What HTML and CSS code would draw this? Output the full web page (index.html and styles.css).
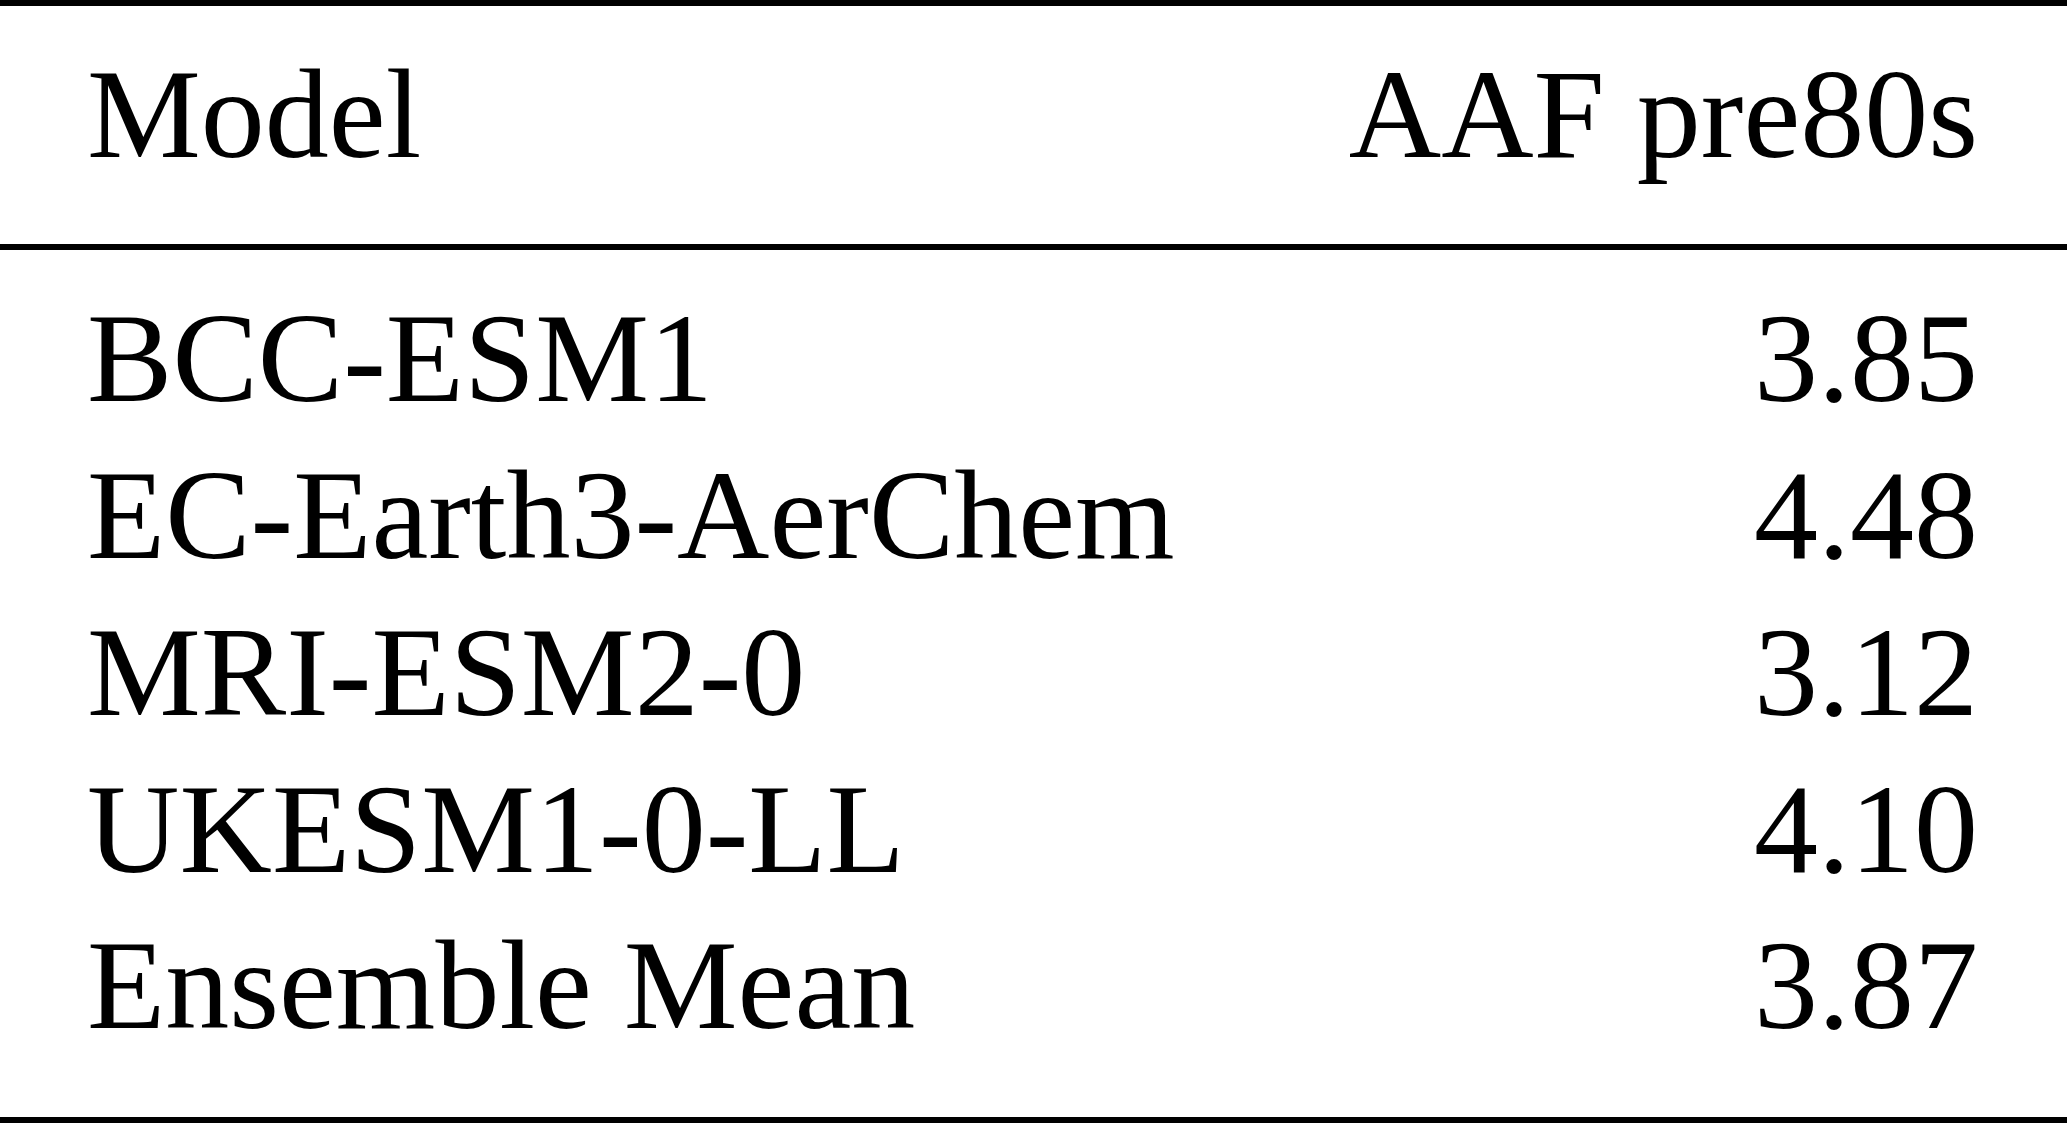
FILE: index.html
```html
<!DOCTYPE html>
<html>
<head>
<meta charset="utf-8">
<link rel="stylesheet" href="styles.css">
</head>
<body>
<div class="table">
  <div class="head">
    <div class="row"><span>Model</span><span>AAF pre80s</span></div>
  </div>
  <div class="body">
    <div class="row"><span>BCC-ESM1</span><span>3.85</span></div>
    <div class="row"><span>EC-Earth3-AerChem</span><span>4.48</span></div>
    <div class="row"><span>MRI-ESM2-0</span><span>3.12</span></div>
    <div class="row"><span>UKESM1-0-LL</span><span>4.10</span></div>
    <div class="row"><span>Ensemble Mean</span><span>3.87</span></div>
  </div>
</div>
</body>
</html>
```
FILE: styles.css
```css
html, body {
  margin: 0;
  padding: 0;
  background: #fff;
}
.table {
  width: 2067px;
  height: 1123px;
  box-sizing: border-box;
  border-top: 6px solid #000;
  border-bottom: 6px solid #000;
  font-family: "Liberation Serif", "Times New Roman", serif;
  font-size: 128px;
  line-height: 156.75px;
  color: #000;
}
.head {
  padding: 30px 0 51px;
  border-bottom: 6px solid #000;
}
.body {
  padding: 30.5px 0 53px;
}
.row {
  display: flex;
  justify-content: space-between;
  padding: 0 89px 0 87px;
  white-space: nowrap;
}
```
